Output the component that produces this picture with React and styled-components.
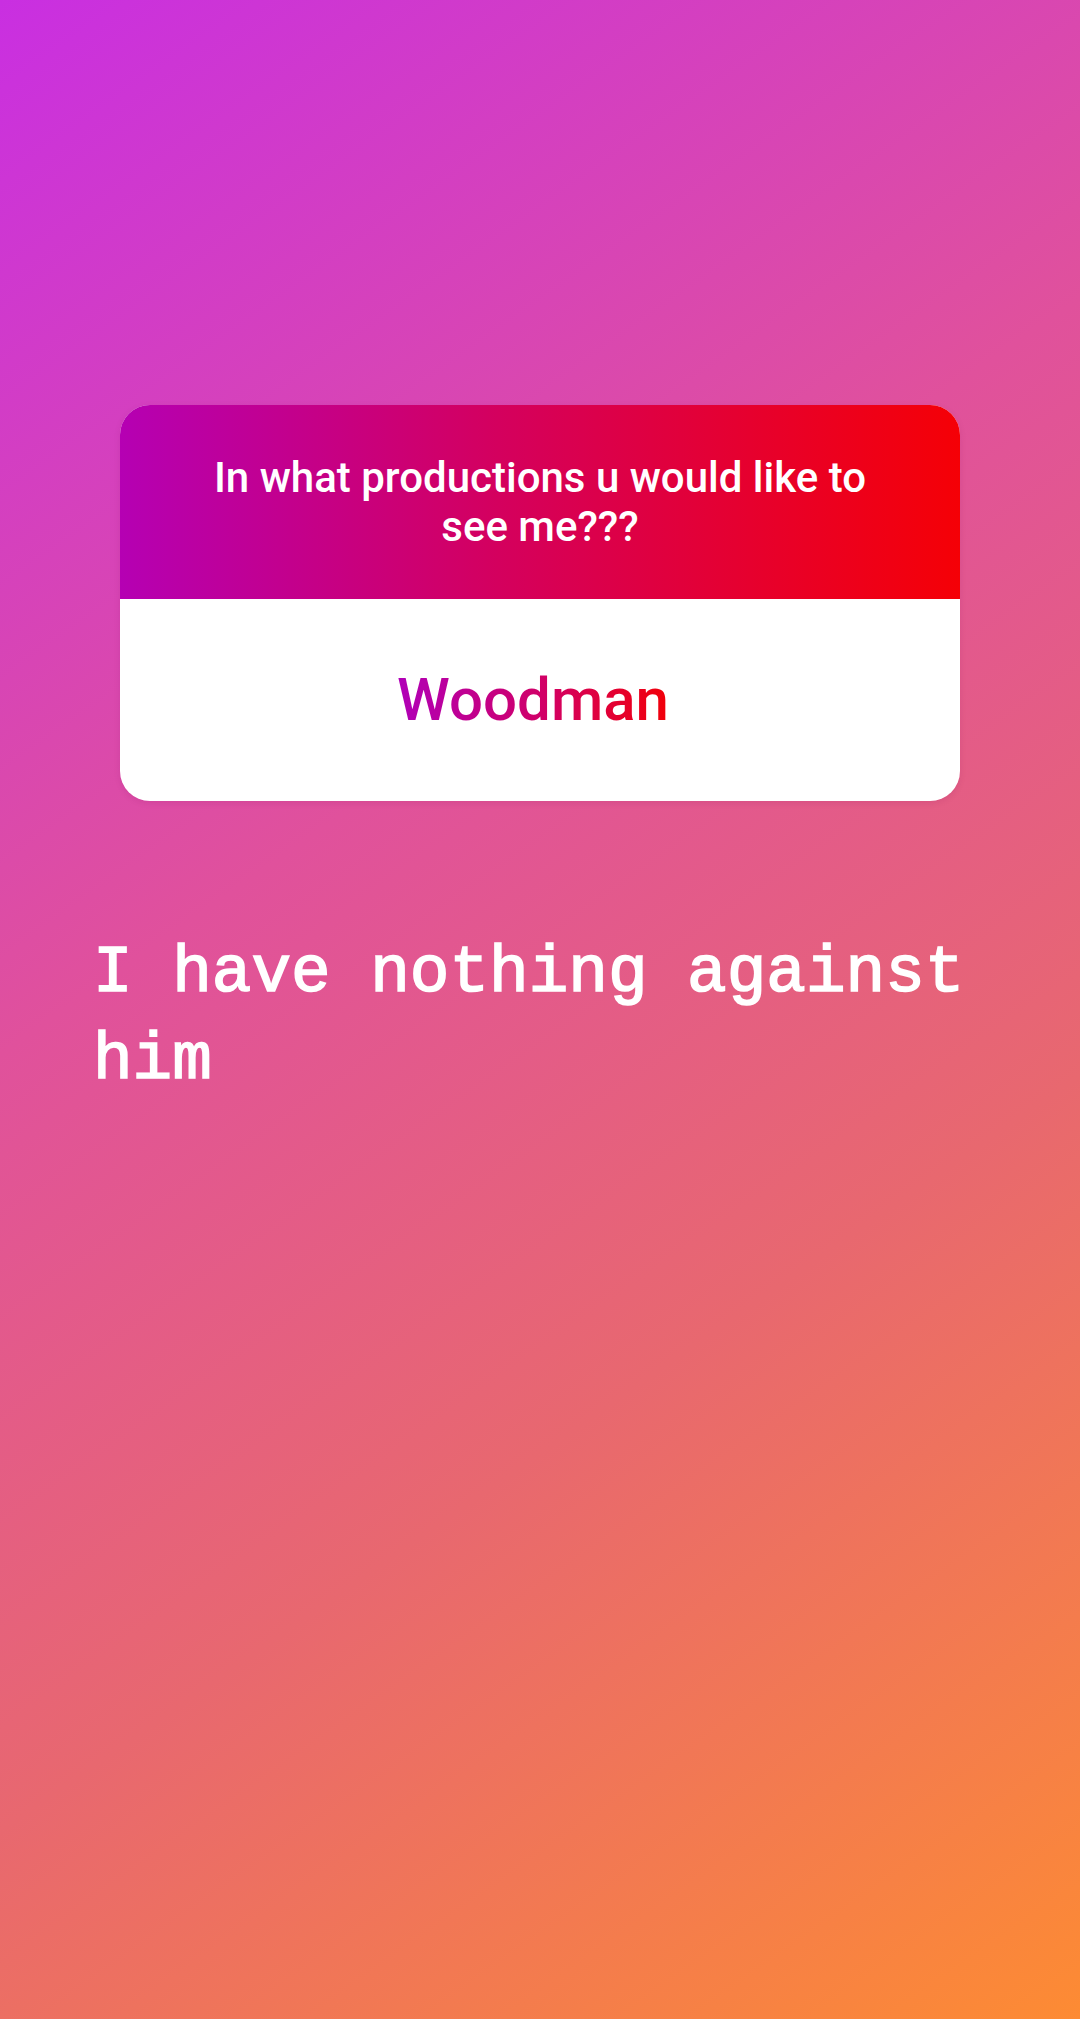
import React from 'react';
import styled, {createGlobalStyle} from 'styled-components';

const GlobalStyle = createGlobalStyle`
  html, body {
    margin: 0;
    padding: 0;
  }
  body {
    font-family: Roboto, "Liberation Sans", sans-serif;
  }
`;

const Story = styled.div`
  width: 1080px;
  height: 2019px;
  box-sizing: border-box;
  padding: 405px 120px 0 120px;
  background: linear-gradient(145deg, #c92fe1 0%, #e0519c 38%, #e8686f 66%, #fd8b33 100%);
  overflow: hidden;
`;

const Card = styled.div`
  width: 840px;
  border-radius: 30px;
  overflow: hidden;
  background: white;
  box-shadow: 0 2px 6px rgba(120, 0, 80, 0.12);
`;

const Question = styled.div`
  height: 194px;
  display: flex;
  align-items: center;
  justify-content: center;
  padding: 0 80px;
  background: linear-gradient(90deg, #b500b3 0%, #d4005e 45%, #f50006 100%);
  color: white;
  font-family: Roboto, "Liberation Sans", sans-serif;
  font-weight: 500;
  font-size: 42px;
  line-height: 49px;
  text-align: center;
`;

const Answer = styled.div`
  height: 202px;
  display: flex;
  align-items: center;
  justify-content: center;
  padding-right: 14px;
`;

const AnswerText = styled.span`
  font-family: Roboto, "Liberation Sans", sans-serif;
  font-weight: 500;
  font-size: 60px;
  line-height: 1;
  background: linear-gradient(90deg, #b000b8 0%, #d20064 55%, #f20008 100%);
  -webkit-background-clip: text;
  background-clip: text;
  color: transparent;
`;

const Caption = styled.p`
  margin: 129px 0 0 -27px;
  width: 920px;
  font-family: "Liberation Mono", "Courier New", monospace;
  font-weight: 400;
  font-size: 66px;
  line-height: 87px;
  color: white;
  -webkit-text-stroke: 1.6px white;
`;

export default function App() {
  return (
    <>
      <GlobalStyle />
      <Story>
        <Card>
          <Question>In what productions u would like to see me???</Question>
          <Answer>
            <AnswerText>Woodman</AnswerText>
          </Answer>
        </Card>
        <Caption>I have nothing against him</Caption>
      </Story>
    </>
  );
}
